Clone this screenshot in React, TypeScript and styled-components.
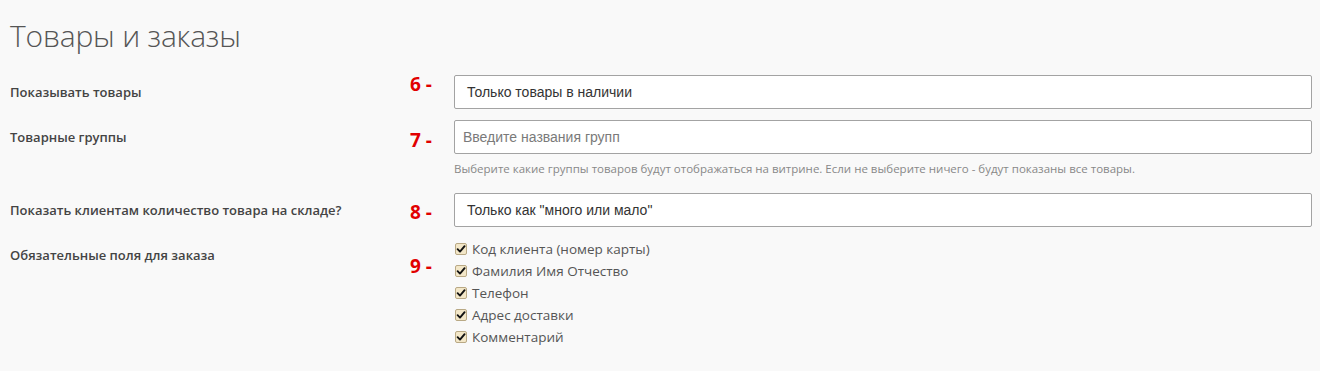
import React from "react";
import styled, { createGlobalStyle } from "styled-components";

const Global = createGlobalStyle`
  html, body { margin: 0; padding: 0; background: #f9f9f9; }
  body { font-family: "Open Sans", "Liberation Sans", sans-serif; color: #333; }
  * { box-sizing: border-box; }
`;

const Page = styled.div`
  padding: 16px 8px 20px 10px;
  background: #f9f9f9;
  min-height: 371px;
`;

const Title = styled.h1`
  margin: 0 0 19px 0;
  font-family: "Open Sans", sans-serif;
  font-weight: 300;
  font-size: 30px;
  line-height: 40px;
  color: #555;
  letter-spacing: -0.2px;
`;

const Row = styled.div<{ $gap?: number }>`
  display: grid;
  grid-template-columns: 400px 44px 1fr;
  align-items: start;
  margin-bottom: ${(p) => p.$gap ?? 11}px;
`;

const Label = styled.div`
  font-family: "Open Sans", sans-serif;
  font-size: 13px;
  font-weight: 600;
  line-height: 34px;
  color: #444;
`;

const Marker = styled.div<{ $shift: number }>`
  margin-top: ${(p) => p.$shift}px;
  font-family: "Open Sans", "Liberation Sans", sans-serif;
  font-weight: 700;
  font-size: 19px;
  line-height: 20px;
  color: #e10000;
`;

const Field = styled.div`
  display: flex;
  flex-direction: column;
`;

const Box = styled.div<{ $pad: number; $muted?: boolean }>`
  height: 34px;
  display: flex;
  align-items: center;
  padding-left: ${(p) => p.$pad}px;
  background: #fff;
  border: 1px solid #a3a3a3;
  border-radius: 2px;
  font-family: "Liberation Sans", Arial, sans-serif;
  font-size: 14px;
  color: ${(p) => (p.$muted ? "#7a7a7a" : "#333")};
`;

const Help = styled.div`
  margin-top: 7px;
  font-family: "Open Sans", sans-serif;
  font-size: 11.5px;
  line-height: 16px;
  color: #888;
`;

const Checks = styled.div`
  display: flex;
  flex-direction: column;
`;

const CheckRow = styled.label`
  display: flex;
  align-items: center;
  height: 22px;
  font-family: "Open Sans", sans-serif;
  font-size: 13.5px;
  color: #555;
`;

const CheckBox = styled.span`
  width: 12px;
  height: 12px;
  margin: 0 5px 0 1px;
  display: inline-flex;
  align-items: center;
  justify-content: center;
  background: #f3e7c8;
  border: 1px solid #b9a985;
  border-radius: 2px;
`;

const Check = () => (
  <CheckBox>
    <svg width="10" height="10" viewBox="0 0 10 10">
      <path d="M1.6 5.2 L4 7.6 L8.6 2.2" fill="none" stroke="#111" strokeWidth="1.9" strokeLinecap="round" strokeLinejoin="round" />
    </svg>
  </CheckBox>
);

const fields = ["Код клиента (номер карты)", "Фамилия Имя Отчество", "Телефон", "Адрес доставки", "Комментарий"];

export default function App() {
  return (
    <Page>
      <Global />
      <Title>Товары и заказы</Title>
      <Row>
        <Label>Показывать товары</Label>
        <Marker $shift={-1}>6 -</Marker>
        <Field>
          <Box $pad={12}>Только товары в наличии</Box>
        </Field>
      </Row>
      <Row $gap={16}>
        <Label>Товарные группы</Label>
        <Marker $shift={10}>7 -</Marker>
        <Field>
          <Box $pad={8} $muted>Введите названия групп</Box>
          <Help>Выберите какие группы товаров будут отображаться на витрине. Если не выберите ничего - будут показаны все товары.</Help>
        </Field>
      </Row>
      <Row>
        <Label>Показать клиентам количество товара на складе?</Label>
        <Marker $shift={9}>8 -</Marker>
        <Field>
          <Box $pad={12}>Только как "много или мало"</Box>
        </Field>
      </Row>
      <Row>
        <Label>Обязательные поля для заказа</Label>
        <Marker $shift={18}>9 -</Marker>
        <Checks>
          {fields.map((f) => (
            <CheckRow key={f}>
              <Check />
              {f}
            </CheckRow>
          ))}
        </Checks>
      </Row>
    </Page>
  );
}
